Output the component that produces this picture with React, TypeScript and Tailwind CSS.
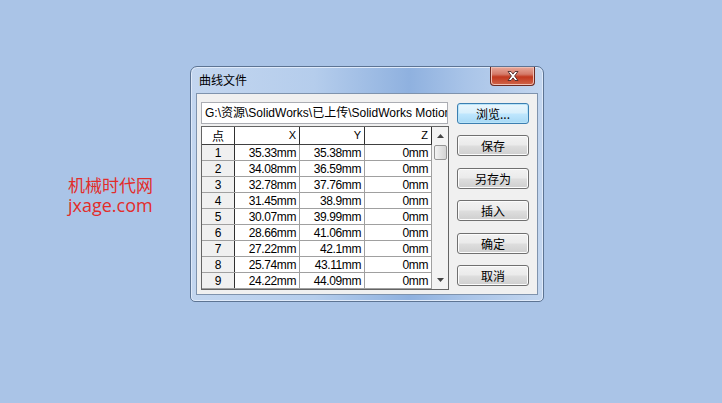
import React from "react";

const rows = [
  ["1", "35.33mm", "35.38mm", "0mm"],
  ["2", "34.08mm", "36.59mm", "0mm"],
  ["3", "32.78mm", "37.76mm", "0mm"],
  ["4", "31.45mm", "38.9mm", "0mm"],
  ["5", "30.07mm", "39.99mm", "0mm"],
  ["6", "28.66mm", "41.06mm", "0mm"],
  ["7", "27.22mm", "42.1mm", "0mm"],
  ["8", "25.74mm", "43.11mm", "0mm"],
  ["9", "24.22mm", "44.09mm", "0mm"],
];

const cjk = "font-['Noto_Sans_CJK_SC',sans-serif]";
const latin = "font-['Liberation_Sans','Noto_Sans_CJK_SC',sans-serif]";

function Btn({ label, primary, className }: { label: string; primary?: boolean; className?: string }) {
  return (
    <div
      className={`h-[21px] w-[72px] rounded-[3px] border flex items-center justify-center text-[12px] text-black ${cjk} ${
        primary
          ? "border-[#3c7fb1] shadow-[inset_0_0_0_1px_#b9e4f9] bg-[linear-gradient(#eaf6fd_0%,#d9f0fc_45%,#bee6fd_55%,#a7d9f5_100%)]"
          : "border-[#707070] shadow-[inset_0_0_0_1px_#fcfcfc] bg-[linear-gradient(#f2f2f2_0%,#ebebeb_45%,#dddddd_55%,#cfcfcf_100%)]"
      } ${className ?? ""}`}
    >
      {label}
    </div>
  );
}

function CloseIcon() {
  return (
    <svg width="14" height="12" viewBox="0 0 14 12">
      <path
        d="M2 1.5h3l2 2.6 2-2.6h3l-3.4 4.5 3.4 4.5h-3l-2-2.6-2 2.6h-3l3.4-4.5z"
        fill="#ffffff"
        stroke="#4a2a2a"
        strokeWidth="0.9"
        strokeLinejoin="round"
      />
    </svg>
  );
}

export default function App() {
  return (
    <div className="relative w-[722px] h-[403px] bg-[#aac4e7] overflow-hidden">
      <div className="absolute left-[68px] top-[175px] text-[#e22d2b]">
        <div className={`text-[17px] leading-[20px] ${cjk}`}>机械时代网</div>
        <div className="text-[18px] leading-[20px] font-['Open_Sans',sans-serif]">jxage.com</div>
      </div>

      <div className="absolute left-[190px] top-[66px] w-[354px] h-[236px] rounded-t-[7px] rounded-b-[5px] border border-[#5d7493] bg-[linear-gradient(90deg,#c3d6ef_0%,#b5cdec_35%,#8fb1df_62%,#a9c4e8_78%,#c3d6ef_100%)] shadow-[inset_0_0_0_1px_#dfeafa] flex flex-col">
        <div className="relative h-[26px] shrink-0 flex items-center pl-[8px]">
          <span className={`text-[12px] text-black ${cjk}`}>曲线文件</span>
          <div className="absolute right-[8px] top-0 w-[45px] h-[19px] rounded-b-[4px] border border-t-0 border-[#6b2a22] bg-[linear-gradient(#e9a99b_0%,#d47a69_40%,#c2391f_55%,#d0654a_100%)] shadow-[inset_0_0_0_1px_#f0bfb4] flex items-center justify-center">
            <CloseIcon />
          </div>
        </div>

        <div className="mx-[5px] mb-[6px] flex-1 border border-[#7f93ad] bg-[#f0f0f0] flex pl-[4px] pt-[8px]">
          <div className="w-[248px] flex flex-col">
            <div className="h-[22px] w-[247px] border border-[#abadb3] bg-white overflow-hidden whitespace-nowrap flex items-center pl-[3px]">
              <span className={`text-[12px] text-black ${latin}`}>G:\资源\SolidWorks\已上传\SolidWorks Motion</span>
            </div>
            <div className="mt-[2px] h-[164px] flex border border-[#646464] bg-white overflow-hidden">
              <div className={`flex-1 ${latin} text-[11px] text-black`}>
                <div className="flex h-[18px] border-b border-[#404040]">
                  <div className={`w-[33px] border-r border-[#303030] flex items-center justify-center text-[12px] ${cjk}`}>点</div>
                  <div className="w-[65px] border-r border-[#303030] flex items-center justify-end pr-[3px]">X</div>
                  <div className="w-[65px] border-r border-[#303030] flex items-center justify-end pr-[3px]">Y</div>
                  <div className="flex-1 border-r border-[#303030] flex items-center justify-end pr-[3px]">Z</div>
                </div>
                {rows.map((r) => (
                  <div key={r[0]} className="flex h-[16px] border-b border-[#a0a0a0] text-[12px] tracking-[-0.4px]">
                    <div className="w-[33px] bg-[#f0f0f0] border-r border-[#303030] flex items-center justify-center">{r[0]}</div>
                    <div className="w-[65px] border-r border-[#a0a0a0] flex items-center justify-end pr-[3px]">{r[1]}</div>
                    <div className="w-[65px] border-r border-[#a0a0a0] flex items-center justify-end pr-[3px]">{r[2]}</div>
                    <div className="flex-1 border-r border-[#a0a0a0] flex items-center justify-end pr-[3px]">{r[3]}</div>
                  </div>
                ))}
              </div>
              <div className="w-[16px] bg-[#f3f3f3] flex flex-col items-center">
                <div className="h-[18px] w-full flex items-center justify-center">
                  <svg width="7" height="4" viewBox="0 0 7 4"><path d="M0 4L3.5 0 7 4z" fill="#444" /></svg>
                </div>
                <div className="w-[13px] h-[15px] rounded-[2px] border border-[#959595] bg-[linear-gradient(90deg,#f3f3f3,#e2e2e2_50%,#d4d4d4)]" />
                <div className="flex-1" />
                <div className="h-[18px] w-full flex items-center justify-center">
                  <svg width="7" height="4" viewBox="0 0 7 4"><path d="M0 0L3.5 4 7 0z" fill="#444" /></svg>
                </div>
              </div>
            </div>
          </div>

          <div className="ml-[8px] flex flex-col pt-[1px]">
            <Btn label="浏览..." primary />
            <Btn label="保存" className="mt-[11px]" />
            <Btn label="另存为" className="mt-[12px]" />
            <Btn label="插入" className="mt-[11px]" />
            <Btn label="确定" className="mt-[12px]" />
            <Btn label="取消" className="mt-[11px]" />
          </div>
        </div>
      </div>
    </div>
  );
}
